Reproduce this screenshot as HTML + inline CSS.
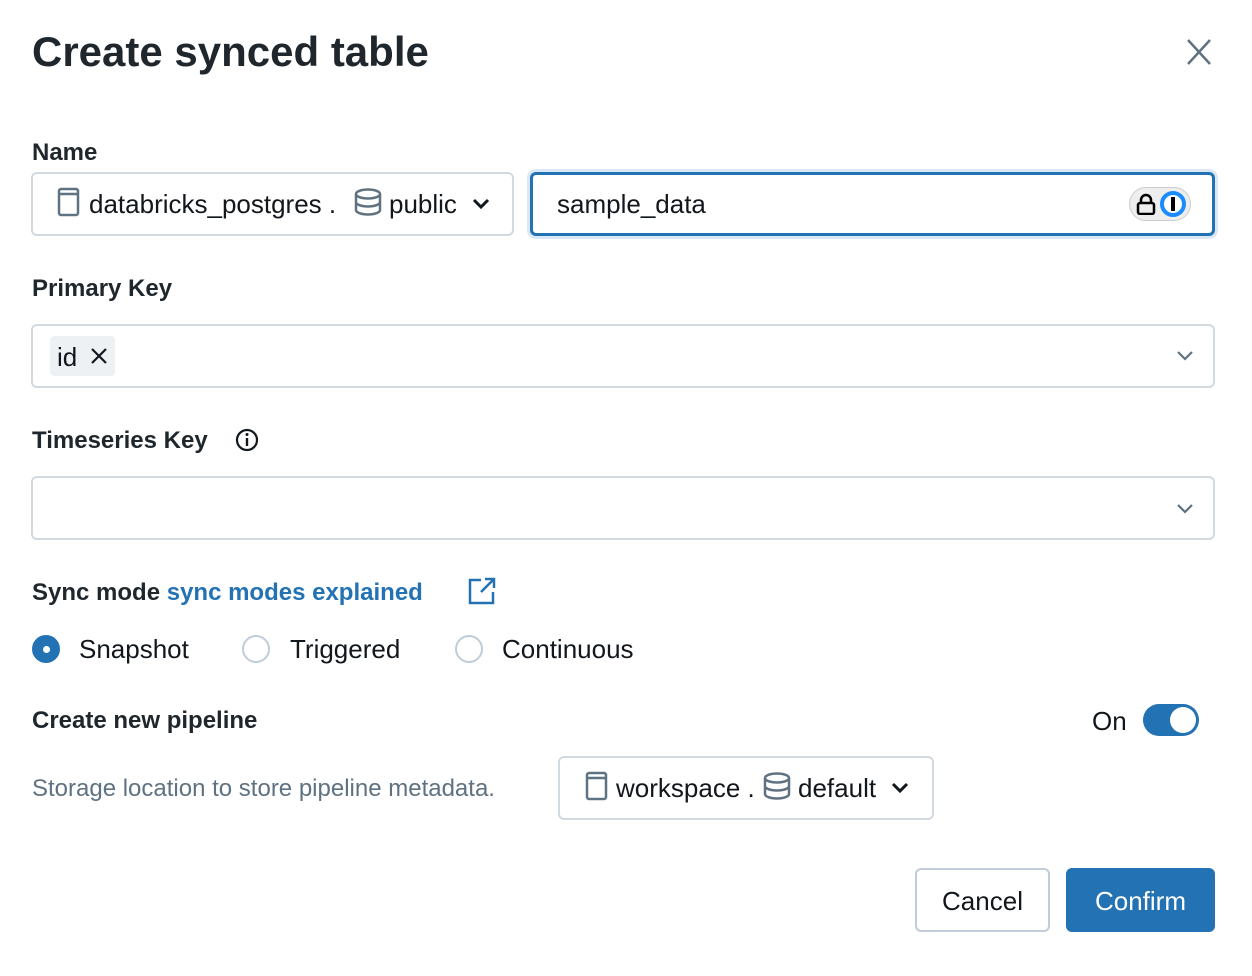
<!DOCTYPE html>
<html><head><meta charset="utf-8"><style>
body{margin:0;width:1252px;height:976px;background:#fff;font-family:"Liberation Sans",sans-serif;color:#11171c;position:relative;overflow:hidden}
.a{position:absolute}
.lbl{font-size:24px;font-weight:bold;color:#1f272d}
.box{position:absolute;border:2px solid #d1d9e1;border-radius:6px;box-sizing:border-box;background:#fff}
.t{font-size:26px;color:#11171c}
.radio{position:absolute;width:28px;height:28px;border-radius:50%;border:2px solid #c0cdd8;box-sizing:border-box}
</style></head><body>
<div class="a" style="left:32px;top:28px;font-size:42px;font-weight:bold;color:#1f272d">Create synced table</div>
<svg class="a" style="left:1186px;top:38px" width="26" height="28"><path d="M2 2L24 26M24 2L2 26" stroke="#5f7281" stroke-width="2.5"/></svg>

<div class="a lbl" style="left:32px;top:139px">Name</div>
<div class="box" style="left:31px;top:172px;width:483px;height:64px"></div>
<svg class="a" style="left:57px;top:187px" width="24" height="30"><rect x="2" y="2" width="19" height="26" rx="2" fill="none" stroke="#5f7281" stroke-width="2.5"/><line x1="2" y1="7" x2="21" y2="7" stroke="#5f7281" stroke-width="2.5"/></svg>
<div class="a t" style="left:89px;top:189px">databricks_postgres .</div>
<svg class="a" style="left:354px;top:188px" width="30" height="28"><ellipse cx="14" cy="6" rx="12" ry="4.5" fill="none" stroke="#5f7281" stroke-width="2.5"/><path d="M2 6V22c0 2.5 5.4 4.5 12 4.5s12-2 12-4.5V6M2 14c0 2.5 5.4 4.5 12 4.5s12-2 12-4.5" fill="none" stroke="#5f7281" stroke-width="2.5"/></svg>
<div class="a t" style="left:389px;top:189px">public</div>
<svg class="a" style="left:472px;top:198px" width="18" height="12"><path d="M2 2l7 7 7-7" fill="none" stroke="#11171c" stroke-width="3"/></svg>

<div class="box" style="left:530px;top:172px;width:685px;height:64px;border:3px solid #2272b4;box-shadow:0 0 0 3px #dbe7f4"></div>
<div class="a t" style="left:557px;top:189px">sample_data</div>
<div class="a" style="left:1129px;top:187px;width:62px;height:34px;border-radius:17px;background:#eee;border:1px solid #ccc;box-sizing:border-box"></div>
<svg class="a" style="left:1136px;top:193px" width="20" height="22"><path d="M5 10V7a5 5 0 0110 0v3" fill="none" stroke="#000" stroke-width="2.5"/><rect x="2" y="10" width="16" height="11" rx="2" fill="none" stroke="#000" stroke-width="2.5"/></svg>
<div class="a" style="left:1160px;top:191px;width:26px;height:26px;border-radius:50%;border:4px solid #1a8cff;box-sizing:border-box;background:#fff"></div>
<div class="a" style="left:1171px;top:197px;width:4px;height:14px;background:#000"></div>

<div class="a lbl" style="left:32px;top:275px">Primary Key</div>
<div class="box" style="left:31px;top:324px;width:1184px;height:64px"></div>
<div class="a" style="left:50px;top:336px;width:65px;height:40px;background:#eef1f4;border-radius:4px"></div>
<div class="a t" style="left:57px;top:342px">id</div>
<svg class="a" style="left:90px;top:347px" width="18" height="18"><path d="M2 2L16 16M16 2L2 16" stroke="#11171c" stroke-width="2.2"/></svg>
<svg class="a" style="left:1177px;top:351px" width="16" height="10"><path d="M1 1l7 7 7-7" fill="none" stroke="#5f7281" stroke-width="2.2"/></svg>

<div class="a lbl" style="left:32px;top:427px">Timeseries Key</div>
<svg class="a" style="left:235px;top:428px" width="24" height="24"><circle cx="12" cy="12" r="10" fill="none" stroke="#11171c" stroke-width="2.2"/><line x1="12" y1="10" x2="12" y2="18" stroke="#11171c" stroke-width="2.4"/><circle cx="12" cy="6.5" r="1.5" fill="#11171c"/></svg>
<div class="box" style="left:31px;top:476px;width:1184px;height:64px"></div>
<svg class="a" style="left:1177px;top:504px" width="16" height="10"><path d="M1 1l7 7 7-7" fill="none" stroke="#5f7281" stroke-width="2.2"/></svg>

<div class="a lbl" style="left:32px;top:579px">Sync mode <span style="color:#2272b4">sync modes explained</span></div>
<svg class="a" style="left:467px;top:576px" width="30" height="30"><path d="M14 4H3v23h23V16M18 3h9v9M27 3L14 16" fill="none" stroke="#2272b4" stroke-width="2.5"/></svg>

<div class="radio" style="left:32px;top:635px;background:#2272b4;border-color:#2272b4"></div>
<div class="a" style="left:43px;top:646px;width:7px;height:7px;border-radius:50%;background:#fff"></div>
<div class="a t" style="left:79px;top:634px">Snapshot</div>
<div class="radio" style="left:242px;top:635px"></div>
<div class="a t" style="left:290px;top:634px">Triggered</div>
<div class="radio" style="left:455px;top:635px"></div>
<div class="a t" style="left:502px;top:634px">Continuous</div>

<div class="a lbl" style="left:32px;top:707px">Create new pipeline</div>
<div class="a t" style="left:1092px;top:706px">On</div>
<div class="a" style="left:1143px;top:704px;width:56px;height:32px;border-radius:16px;background:#2272b4"></div>
<div class="a" style="left:1170px;top:707px;width:26px;height:26px;border-radius:50%;background:#fff"></div>

<div class="a" style="left:32px;top:775px;font-size:24px;color:#5f7281">Storage location to store pipeline metadata.</div>
<div class="box" style="left:558px;top:756px;width:376px;height:64px"></div>
<svg class="a" style="left:585px;top:771px" width="24" height="30"><rect x="2" y="2" width="19" height="26" rx="2" fill="none" stroke="#5f7281" stroke-width="2.5"/><line x1="2" y1="7" x2="21" y2="7" stroke="#5f7281" stroke-width="2.5"/></svg>
<div class="a t" style="left:616px;top:773px">workspace .</div>
<svg class="a" style="left:763px;top:772px" width="30" height="28"><ellipse cx="14" cy="6" rx="12" ry="4.5" fill="none" stroke="#5f7281" stroke-width="2.5"/><path d="M2 6V22c0 2.5 5.4 4.5 12 4.5s12-2 12-4.5V6M2 14c0 2.5 5.4 4.5 12 4.5s12-2 12-4.5" fill="none" stroke="#5f7281" stroke-width="2.5"/></svg>
<div class="a t" style="left:798px;top:773px">default</div>
<svg class="a" style="left:891px;top:782px" width="18" height="12"><path d="M2 2l7 7 7-7" fill="none" stroke="#11171c" stroke-width="3"/></svg>

<div class="box" style="left:915px;top:868px;width:135px;height:64px;border-color:#c0cdd8"></div>
<div class="a t" style="left:915px;top:886px;width:135px;text-align:center">Cancel</div>
<div class="a" style="left:1066px;top:868px;width:149px;height:64px;background:#2272b4;border-radius:6px"></div>
<div class="a t" style="left:1066px;top:886px;width:149px;text-align:center;color:#fff">Confirm</div>
</body></html>
